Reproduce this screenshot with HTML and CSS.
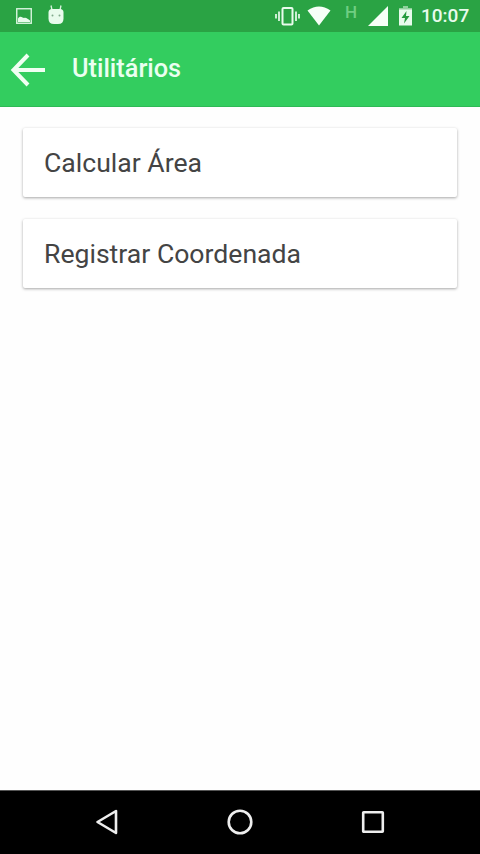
FILE: index.html
```
<!DOCTYPE html>
<html lang="pt-br">
<head>
<meta charset="utf-8">
<title>Utilitários</title>
<meta name="viewport" content="width=device-width, initial-scale=1.0">
<link rel="stylesheet" href="styles.css">
</head>
<body>
<div class="screen">
    <div class="status-bar">
        <div class="notifications">
            <svg width="16" height="16" viewBox="0 0 16 16">
                <rect x="0.75" y="0.75" width="14.5" height="14.5" fill="none" stroke="#d9f5df" stroke-width="1.4"/>
                <path d="M2 14V10.500C3 8.500 5 8 6.500 9.500L8 10C10 9 11 10.500 12 11L14 12.500V14Z" fill="#e8fbec"/>
            </svg>
            <svg width="16" height="20" viewBox="0 0 16 20">
                <path d="M4 6L3 1.500M12 6L13 1.500" stroke="#d9f5df" stroke-width="1.3"/>
                <path d="M0.500 8.500Q0.500 5 4 5H12Q15.500 5 15.500 8.500V14.500Q15.500 20 10 20H6Q0.500 20 0.500 14.500Z" fill="#e8fbec"/>
                <circle cx="4.500" cy="11.500" r="1" fill="#7fa98a"/>
                <circle cx="11.500" cy="11.500" r="1" fill="#7fa98a"/>
            </svg>
        </div>
        <div class="system">
            <svg class="vibrate" width="25" height="20" viewBox="0 0 25 20">
                <rect x="7.500" y="2" width="10" height="16.500" rx="1" fill="none" stroke="#e8fbec" stroke-width="2"/>
                <path d="M1 8V12.500M4 5.500V15M21 5.500V15M24 8V12.500" stroke="#e8fbec" stroke-width="1.700"/>
            </svg>
            <svg class="wifi" width="24" height="20" viewBox="0 0 24 20">
                <path d="M0.500 4.500Q12 -3.500 23.500 4.500L12 19.500Z" fill="#f6fff7"/>
            </svg>
            <span class="network">H</span>
            <svg class="signal" width="20" height="20" viewBox="0 0 20 20">
                <path d="M0 20L20 0V20Z" fill="#f6fff7"/>
            </svg>
            <svg class="battery" width="13" height="20" viewBox="0 0 13 20">
                <path d="M0 4V2H4V0H9V2H13V4Z" fill="#8fd19c"/>
                <path d="M0 3.500H13V19.500H0Z" fill="#e8fbec"/>
                <path d="M7.500 5L2.500 12H6L5 17.500L10.500 10H7Z" fill="#259b3e"/>
            </svg>
            <span class="clock">10:07</span>
        </div>
    </div>
    <header>
        <svg width="35" height="34" viewBox="0 0 35 34">
            <path d="M18 2L3.500 17L18 32M3.500 17H35" fill="none" stroke="#f0fff2" stroke-width="4"/>
        </svg>
        <h1>Utilitários</h1>
    </header>
    <main>
        <div class="card">Calcular Área</div>
        <div class="card">Registrar Coordenada</div>
    </main>
    <nav>
        <svg width="24" height="26" viewBox="0 0 24 26">
            <path d="M21 2V24L2.500 13Z" fill="none" stroke="#eee" stroke-width="2.600" stroke-linejoin="round"/>
        </svg>
        <svg width="26" height="26" viewBox="0 0 26 26">
            <circle cx="13" cy="13" r="11.300" fill="none" stroke="#eee" stroke-width="2.600"/>
        </svg>
        <svg width="24" height="26" viewBox="0 0 24 26">
            <rect x="2.200" y="3.200" width="19.600" height="19.600" rx="0.500" fill="none" stroke="#eee" stroke-width="2.600"/>
        </svg>
    </nav>
</div>
</body>
</html>
```
FILE: styles.css
```
* {
    margin: 0;
    padding: 0;
    box-sizing: border-box;
    font-family: Roboto, sans-serif;
}

body {
    background: #fefefe;
}

svg {
    display: block;
    flex-shrink: 0;
}

.screen {
    display: flex;
    flex-direction: column;
    height: 100vh;
}

.status-bar {
    display: flex;
    justify-content: space-between;
    height: 32px;
    padding: 0 10px 0 16px;
    background: #2aa344;
}

.notifications {
    display: flex;
    gap: 16px;
    align-items: flex-end;
    padding-bottom: 8px;
}

.system {
    display: flex;
    align-items: center;
}

.wifi {
    margin-left: 7px;
}

.network {
    width: 12px;
    margin: 0 11px 8px 14px;
    font-size: 17px;
    font-weight: 500;
    line-height: 20px;
    color: #6fce82;
}

.battery {
    margin-left: 11px;
}

.clock {
    width: 49px;
    margin-left: 9px;
    font-size: 19px;
    font-weight: 500;
    line-height: 34px;
    color: #e8fbec;
}

header {
    display: flex;
    align-items: center;
    height: 75px;
    padding: 1px 10px 0;
    background: #33cd5f;
    border-bottom: 1px solid #2fb956;
}

header h1 {
    margin: 0 0 2px 27px;
    font-size: 25.3px;
    font-weight: 500;
    color: #eafff0;
}

main {
    flex: 1;
    padding: 21px 23px;
}

.card {
    height: 69px;
    margin-bottom: 22px;
    padding-left: 21px;
    font-size: 26.6px;
    line-height: 70px;
    color: #444;
    background: #fff;
    border-radius: 2px;
    box-shadow: 0 1px 3px rgba(0, 0, 0, 0.35);
}

nav {
    display: flex;
    justify-content: space-between;
    align-items: center;
    height: 64px;
    padding: 0 95px 2px;
    background: #000;
    border-top: 1px solid #555;
}
```
